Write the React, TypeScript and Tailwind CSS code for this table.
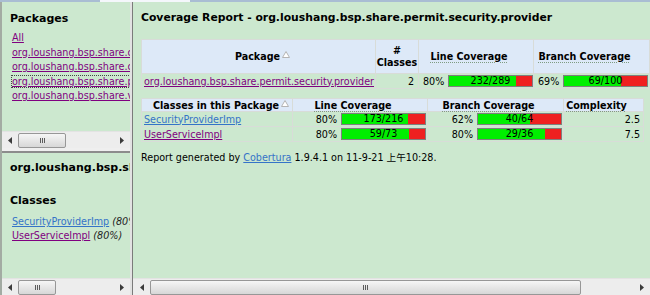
import React from 'react'

const visited = 'text-[#800080] underline'
const fresh = 'text-[#3573c8] underline'

const Arrow = ({ dir }: { dir: 'l' | 'r' }) => (
  <svg width="4" height="7" viewBox="0 0 4 7">
    <path d={dir === 'l' ? 'M4 0 L0 3.5 L4 7 Z' : 'M0 0 L4 3.5 L0 7 Z'} fill="#3c3c3c" />
  </svg>
)

const Scrollbar = ({ thumb, arrow = 'w-[16px]' }: { thumb: string; arrow?: string }) => (
  <div className="flex h-[17px] shrink-0 items-center border-t border-[#e3e3e3] bg-[#ededed]">
    <div className={`flex h-full items-center justify-center ${arrow}`}>
      <Arrow dir="l" />
    </div>
    <div
      className={`flex h-[15px] items-center justify-center gap-px rounded-[2px] border border-[#979797] bg-linear-to-b from-[#f6f6f6] to-[#d7d7d7] ${thumb}`}
    >
      <span className="h-[5px] w-px bg-[#5c5c5c]" />
      <span className="h-[5px] w-px bg-[#5c5c5c]" />
      <span className="h-[5px] w-px bg-[#5c5c5c]" />
    </div>
    <div className="flex-1" />
    <div className={`flex h-full items-center justify-center ${arrow}`}>
      <Arrow dir="r" />
    </div>
  </div>
)

const SortArrow = () => (
  <svg width="8" height="7" viewBox="0 0 8 7" className="ml-[2px] -mt-[5px] inline-block">
    <path d="M4 0.5 L7.5 6.5 L0.5 6.5 Z" fill="#ffffff" stroke="#b4b4b4" strokeWidth="1" />
  </svg>
)

const Bar = ({ pct, text }: { pct: number; text: string }) => (
  <div className="relative h-[12px] w-[85px] shrink-0 border border-[#7f7f7f] bg-[#ef2020]">
    <div className="h-full bg-[#00ef00]" style={{ width: `${pct}%` }} />
    <span className="absolute inset-0 text-center leading-[10px]">{text}</span>
  </div>
)

const Title = ({ children }: { children: React.ReactNode }) => (
  <span className="underline decoration-[#7f9c82] decoration-dotted underline-offset-2">
    {children}
  </span>
)

const cell = 'border border-[#d8dcd8] p-0'
const head = 'border border-[#d8dcd8] bg-[#dde9f8] p-0 text-center font-bold'

const classes = [
  { name: 'SecurityProviderImp', link: fresh, line: [80.1, '173/216'], branch: [62.5, '40/64', '62%'], cx: '2.5' },
  { name: 'UserServiceImpl', link: visited, line: [80.8, '59/73'], branch: [80.6, '29/36', '80%'], cx: '7.5' },
] as const

export default function App() {
  return (
    <div className="flex h-[295px] w-[650px] flex-col overflow-hidden bg-[#cce8cf] font-['DejaVu_Sans','Noto_Sans_CJK_SC',sans-serif] text-black">
      <div className="flex h-[2px] shrink-0 bg-[#a9bdd3]">
        <div className="ml-[100px] w-[90px] bg-[#f4f7fb]" />
      </div>
      <div className="flex min-h-0 flex-1">
        {/* left frames */}
        <div className="flex w-[130px] shrink-0 flex-col border-l-2 border-[#a3aba3]">
          <div className="flex h-[146px] flex-col">
            <div className="min-h-0 flex-1 overflow-hidden whitespace-nowrap pl-[8px] pt-[10px]">
              <h5 className="text-[11px] font-bold leading-[13px]">Packages</h5>
              <div className="mt-[6px] pl-[2px] text-[9.6px] leading-[14.5px]">
                <div><a className={visited}>All</a></div>
                <div><a className={visited}>org.loushang.bsp.share.common</a></div>
                <div><a className={visited}>org.loushang.bsp.share.cache</a></div>
                <div>
                  <a className={`${visited} outline-1 outline-dotted outline-[#444]`}>
                    org.loushang.bsp.share.permit.security.provider
                  </a>
                </div>
                <div><a className={visited}>org.loushang.bsp.share.vo</a></div>
              </div>
            </div>
            <Scrollbar thumb="w-[48px]" />
          </div>
          <div className="h-[5px] shrink-0 border-b-2 border-[#8c8c8c] bg-[#efefef]" />
          <div className="flex min-h-0 flex-1 flex-col">
            <div className="min-h-0 flex-1 overflow-hidden whitespace-nowrap pl-[8px] pt-[8px]">
              <h5 className="text-[11px] font-bold leading-[13px]">
                org.loushang.bsp.share.permit.security.provider
              </h5>
              <h5 className="mt-[20px] text-[11px] font-bold leading-[13px]">Classes</h5>
              <div className="mt-[8px] pl-[2px] text-[9.6px] leading-[14px]">
                <div>
                  <a className={fresh}>SecurityProviderImp</a> <i className="text-[#222]">(80%)</i>
                </div>
                <div>
                  <a className={visited}>UserServiceImpl</a> <i className="text-[#222]">(80%)</i>
                </div>
              </div>
            </div>
            <Scrollbar thumb="w-[38px]" />
          </div>
        </div>

        <div className="w-[3px] shrink-0 border-r border-[#7b7b7b] bg-[#e2e2e2]" />

        {/* right frame */}
        <div className="flex min-w-0 flex-1 flex-col">
          <div className="min-h-0 flex-1 overflow-hidden pl-[8px] pt-[9px]">
            <h5 className="whitespace-nowrap text-[10.8px] font-bold leading-[13px]">
              Coverage Report - org.loushang.bsp.share.permit.security.provider
            </h5>

            <table className="mt-[15px] w-[508px] table-fixed border-collapse text-[9.6px] leading-[11px]">
              <colgroup>
                <col className="w-[234px]" />
                <col className="w-[43px]" />
                <col className="w-[115px]" />
                <col className="w-[116px]" />
              </colgroup>
              <thead>
                <tr className="h-[34px]">
                  <td className={head}>
                    <span className="ml-[8px]">Package</span>
                    <SortArrow />
                  </td>
                  <td className={`${head} leading-[12px]`}>
                    #<br />
                    Classes
                  </td>
                  <td className={head}>
                    <span className="mr-[14px]">
                      <Title>Line Coverage</Title>
                    </span>
                  </td>
                  <td className={head}>
                    <span className="mr-[14px]">
                      <Title>Branch Coverage</Title>
                    </span>
                  </td>
                </tr>
              </thead>
              <tbody>
                <tr className="h-[15px]">
                  <td className={`${cell} whitespace-nowrap pl-[2px]`}>
                    <a className={visited}>org.loushang.bsp.share.permit.security.provider</a>
                  </td>
                  <td className={`${cell} pr-[4px] text-right`}>2</td>
                  <td className={cell}>
                    <div className="flex items-center justify-between pl-[4px]">
                      <span>80%</span>
                      <Bar pct={80.7} text="232/289" />
                    </div>
                  </td>
                  <td className={cell}>
                    <div className="flex items-center justify-between pl-[4px] pr-px">
                      <span>69%</span>
                      <Bar pct={69} text="69/100" />
                    </div>
                  </td>
                </tr>
              </tbody>
            </table>

            <table className="mt-[9px] w-[502px] table-fixed border-collapse text-[9.6px] leading-[11px]">
              <colgroup>
                <col className="w-[151px]" />
                <col className="w-[135px]" />
                <col className="w-[136px]" />
                <col className="w-[80px]" />
              </colgroup>
              <thead>
                <tr className="h-[13px]">
                  <td className={head}>
                    <span className="ml-[8px]">Classes in this Package</span>
                    <SortArrow />
                  </td>
                  <td className={head}>
                    <span className="mr-[14px]">
                      <Title>Line Coverage</Title>
                    </span>
                  </td>
                  <td className={head}>
                    <span className="mr-[14px]">
                      <Title>Branch Coverage</Title>
                    </span>
                  </td>
                  <td className={head}>
                    <span className="mr-[14px]">
                      <Title>Complexity</Title>
                    </span>
                  </td>
                </tr>
              </thead>
              <tbody>
                {classes.map((c) => (
                  <tr key={c.name} className="h-[15px]">
                    <td className={`${cell} whitespace-nowrap pl-[2px]`}>
                      <a className={c.link}>{c.name}</a>
                    </td>
                    <td className={cell}>
                      <div className="flex items-center justify-end gap-[4px] pr-px">
                        <span>80%</span>
                        <Bar pct={c.line[0]} text={c.line[1]} />
                      </div>
                    </td>
                    <td className={cell}>
                      <div className="flex items-center justify-end gap-[4px] pr-px">
                        <span>{c.branch[2]}</span>
                        <Bar pct={c.branch[0]} text={c.branch[1]} />
                      </div>
                    </td>
                    <td className={`${cell} pr-[3px] text-right`}>{c.cx}</td>
                  </tr>
                ))}
              </tbody>
            </table>

            <p className="mt-[10px] whitespace-nowrap text-[9.6px] leading-[11px]">
              Report generated by <a className={fresh}>Cobertura</a> 1.9.4.1 on 11-9-21 上午10:28.
            </p>
          </div>
          <Scrollbar thumb="w-[431px]" arrow="w-[17px]" />
        </div>
      </div>
    </div>
  )
}
